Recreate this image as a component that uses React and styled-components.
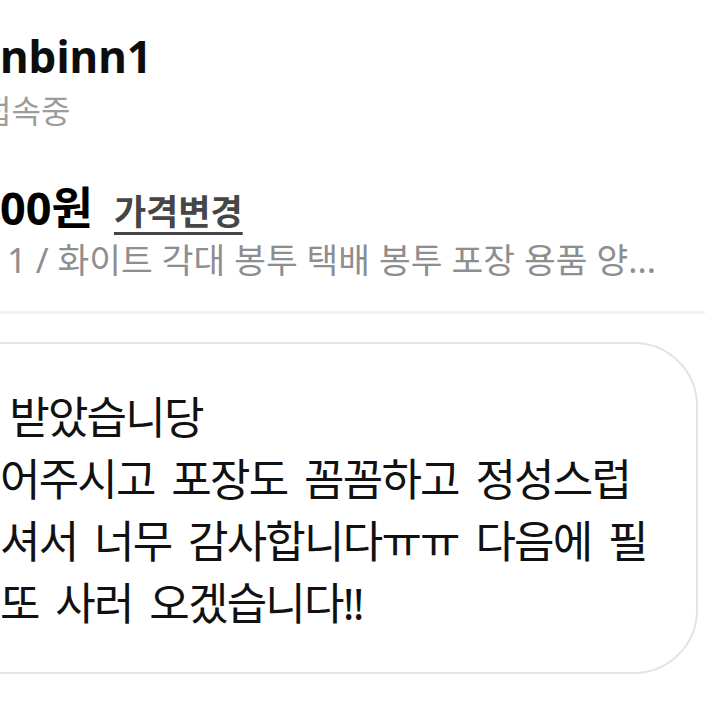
import styled, { createGlobalStyle } from 'styled-components'

const GlobalStyle = createGlobalStyle`
  html, body {
    margin: 0;
    padding: 0;
    background: #ffffff;
  }

  body {
    font-family: "Noto Sans", "Noto Sans CJK KR", sans-serif;
    color: #111111;
  }
`

// first line starts after a narrow space, the rest start at the cut edge
const messageLines = [
  '\u2005받았습니당',
  '어주시고 포장도 꼼꼼하고 정성스럽',
  '셔서 너무 감사합니다ㅠㅠ 다음에 필',
  '또 사러 오겠습니다!!'
]

function App() {
  return (
    <Page>
      <GlobalStyle />

      <Header>
        <Name>nbinn1</Name>
        <Status>접속중</Status>
      </Header>

      <Product>
        <PriceRow>
          <Price>00원</Price>
          <ChangeLink href='#'>가격변경</ChangeLink>
        </PriceRow>
        <Title>1 / 화이트 각대 봉투 택배 봉투 포장 용품 양...</Title>
      </Product>

      <Divider />

      <Bubble>
        {messageLines.map((line) =>
          <Line key={line}>{line}</Line>
        )}
      </Bubble>
    </Page>
  )
}

const Page = styled.div`
  width: 705px;
  height: 705px;
  overflow: hidden;
  background: #ffffff;
`

const Header = styled.header`
  padding-top: 31px;
`

const Name = styled.h1`
  margin: 0;
  font-size: 44px;
  font-weight: 700;
  line-height: 50px;
  color: #0d0d0d;
`

const Status = styled.div`
  margin: 10px 0 0 -18px;
  font-size: 32px;
  line-height: 40px;
  color: #9c9c9c;
`

const Product = styled.section`
  margin-top: 51px;
`

const PriceRow = styled.div`
  display: flex;
  align-items: baseline;
  gap: 21px;
  line-height: 52px;
`

const Price = styled.span`
  font-size: 45px;
  font-weight: 700;
  color: #000000;
`

const ChangeLink = styled.a`
  font-size: 35px;
  font-weight: 600;
  color: #464646;
  text-decoration: underline;
  text-decoration-thickness: 3px;
  text-underline-offset: 7px;
`

const Title = styled.div`
  margin: 0 0 0 7px;
  font-size: 34.5px;
  line-height: 44px;
  color: #8e8e8e;
  white-space: nowrap;
`

const Divider = styled.hr`
  margin: 29px 0 0;
  height: 3px;
  border: none;
  background: #f2f2f2;
`

const Bubble = styled.div`
  margin: 28px 7px 0 -60px;
  padding: 42px 0 38px 58px;
  border: 2px solid #e4e4e4;
  border-radius: 64px;
  background: #ffffff;
`

const Line = styled.p`
  margin: 0;
  font-size: 44px;
  font-weight: 400;
  line-height: 62px;
  letter-spacing: -1.8px;
  word-spacing: 7px;
  white-space: pre;
  color: #111111;
`

export default App
